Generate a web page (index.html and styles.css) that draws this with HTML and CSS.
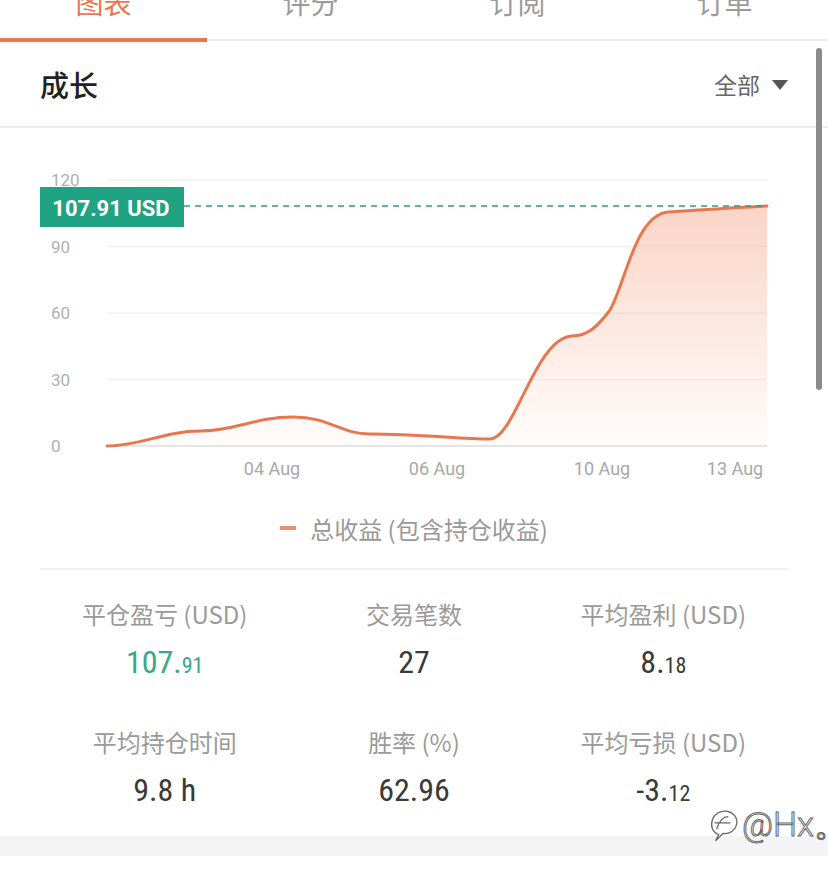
FILE: index.html
```html
<!DOCTYPE html>
<html>
    <head>
        <title>成长</title>
        <meta charset="utf-8">
        <link rel="stylesheet" href="styles.css">
    </head>
    <body>
        <div id="page">
            <div class="tabs">
                <div class="tab active">图表</div>
                <div class="tab">评分</div>
                <div class="tab">订阅</div>
                <div class="tab">订单</div>
            </div>

            <div class="section-head">
                <span class="section-title">成长</span>
                <span class="range-pick">全部<i class="caret"></i></span>
            </div>

            <div class="chart">
                <svg width="748" height="362" viewBox="0 0 748 362">
                    <defs>
                        <linearGradient id="area" x1="0" y1="78" x2="0" y2="318" gradientUnits="userSpaceOnUse">
                            <stop offset="0" stop-color="#f07a4e" stop-opacity="0.32"/>
                            <stop offset="1" stop-color="#f07a4e" stop-opacity="0.02"/>
                        </linearGradient>
                    </defs>
                    <!-- grid -->
                    <g class="grid">
                        <line x1="67" y1="52" x2="727" y2="52"/>
                        <line x1="67" y1="118.5" x2="727" y2="118.5"/>
                        <line x1="67" y1="185" x2="727" y2="185"/>
                        <line x1="67" y1="251.5" x2="727" y2="251.5"/>
                    </g>
                    <line class="base" x1="67" y1="318" x2="727" y2="318"/>
                    <g class="y-labels">
                        <text x="11" y="52">120</text>
                        <text x="11" y="118.5">90</text>
                        <text x="11" y="185">60</text>
                        <text x="11" y="251.5">30</text>
                        <text x="11" y="318">0</text>
                    </g>
                    <g class="x-labels">
                        <text x="232" y="340">04 Aug</text>
                        <text x="397" y="340">06 Aug</text>
                        <text x="562" y="340">10 Aug</text>
                        <text x="695" y="340">13 Aug</text>
                    </g>
                    <path class="area" d="M67,318 C100,318 125,303 160,303 C195,303 215,289 253,289 C290,289 300,306 330,306 C380,306 420,311 450,311 C475,311 495,210 532,208 C548,208 558,198 570,182 C585,157 595,87 628,84 C650,83 680,80 727,78 L727,318 Z"/>
                    <path class="curve" d="M67,318 C100,318 125,303 160,303 C195,303 215,289 253,289 C290,289 300,306 330,306 C380,306 420,311 450,311 C475,311 495,210 532,208 C548,208 558,198 570,182 C585,157 595,87 628,84 C650,83 680,80 727,78"/>
                    <line class="last" x1="144" y1="78" x2="727" y2="78"/>
                    <rect class="tag" x="0" y="59" width="144" height="40"/>
                    <text class="tag-text" x="71" y="80">107.91 USD</text>
                </svg>
                <div class="legend"><i class="legend-mark"></i>总收益 (包含持仓收益)</div>
            </div>

            <div class="stats">
                <div class="stat">
                    <div class="stat-label">平仓盈亏 (USD)</div>
                    <div class="stat-value up">107.<small>91</small></div>
                </div>
                <div class="stat">
                    <div class="stat-label">交易笔数</div>
                    <div class="stat-value">27</div>
                </div>
                <div class="stat">
                    <div class="stat-label">平均盈利 (USD)</div>
                    <div class="stat-value">8.<small>18</small></div>
                </div>
                <div class="stat">
                    <div class="stat-label">平均持仓时间</div>
                    <div class="stat-value">9.8 h</div>
                </div>
                <div class="stat">
                    <div class="stat-label">胜率 (%)</div>
                    <div class="stat-value">62.96</div>
                </div>
                <div class="stat">
                    <div class="stat-label">平均亏损 (USD)</div>
                    <div class="stat-value">-3.<small>12</small></div>
                </div>
            </div>

            <div class="band"></div>

            <div class="scrollbar"></div>
            <div class="watermark">
                <svg width="32" height="38" viewBox="0 0 30 36">
                    <path d="M10,27 C4,25 2,19 4,13 C6,7 12,4 18,5 C24,6 28,11 27,17 C26,23 20,27 14,26 L7,33 L10,27 Z" fill="#fff" stroke="#666" stroke-width="1.2"/>
                    <path d="M8,22 C10,15 13,10 19,10 M6,16 L21,16" fill="none" stroke="#666" stroke-width="1.2"/>
                </svg>
                <span>@Hx。</span>
            </div>
        </div>
    </body>
</html>
```

FILE: styles.css
```css
body {
    margin: 0;
    background-color: #fff;
    font-family: "Noto Sans CJK SC", "Noto Sans", sans-serif;
    overflow: hidden;
}

#page {
    position: relative;
    width: 828px;
    height: 873px;
    overflow: hidden;
}

.tabs {
    display: flex;
    margin-top: -12px;
}

.tab {
    flex: 1;
    text-align: center;
    font-size: 28px;
    line-height: 28px;
    color: #9b9b9b;
    padding-bottom: 23px;
    border-bottom: 2px solid #ebebeb;
    margin-bottom: 1px;
}

.tab.active {
    color: #e8774f;
    padding-bottom: 22px;
    border-bottom: 4px solid #e8774f;
    margin-bottom: 0;
}

.section-head {
    display: flex;
    align-items: center;
    justify-content: space-between;
    height: 84px;
    padding: 0 40px;
    border-bottom: 2px solid #ececec;
}

.section-title {
    font-size: 29px;
    font-weight: 500;
    color: #222;
}

.range-pick {
    display: flex;
    align-items: center;
    font-size: 23px;
    color: #666;
}

.caret {
    display: inline-block;
    margin-left: 12px;
    margin-top: 2px;
    border-left: 8px solid transparent;
    border-right: 8px solid transparent;
    border-top: 10px solid #555;
}

.chart {
    padding: 0 40px;
}

.chart svg {
    display: block;
}

.grid line {
    stroke: #f2f2f2;
    stroke-width: 1.5;
}

.base {
    stroke: #dedede;
    stroke-width: 1.5;
}

.y-labels text {
    font-family: Roboto, "Liberation Sans", sans-serif;
    font-size: 17px;
    fill: #b0b0b0;
    dominant-baseline: central;
}

.x-labels text {
    font-family: Roboto, "Liberation Sans", sans-serif;
    font-size: 18px;
    fill: #a8a8a8;
    text-anchor: middle;
    dominant-baseline: central;
}

.area {
    fill: url(#area);
}

.curve {
    fill: none;
    stroke: #e8774f;
    stroke-width: 3;
    stroke-linecap: round;
}

.last {
    stroke: #27a080;
    stroke-width: 1.5;
    stroke-dasharray: 6 5;
}

.tag {
    fill: #1fa383;
}

.tag-text {
    font-family: Roboto, "Liberation Sans", sans-serif;
    font-size: 22px;
    font-weight: 700;
    fill: #fff;
    text-anchor: middle;
    dominant-baseline: central;
}

.legend {
    display: flex;
    align-items: center;
    justify-content: center;
    margin-top: 22px;
    margin-bottom: 24px;
    height: 32px;
    font-size: 24px;
    color: #999;
}

.legend-mark {
    display: inline-block;
    width: 16px;
    height: 4px;
    background-color: #e8906d;
    margin-right: 14px;
}

.stats {
    display: grid;
    grid-template-columns: repeat(3, 1fr);
    row-gap: 40px;
    margin: 0 40px;
    padding: 28px 0 22px;
    border-top: 2px solid #f1f1f1;
}

.stat {
    display: flex;
    flex-direction: column;
    align-items: center;
    gap: 12px;
}

.stat-label {
    font-size: 24px;
    line-height: 32px;
    color: #9a9a9a;
}

.stat-value {
    font-family: "Liberation Sans Narrow", "Roboto Condensed", Roboto, sans-serif;
    font-size: 32px;
    line-height: 40px;
    color: #3a3a3a;
}

.stat-value small {
    font-size: 22px;
}

.stat-value.up {
    color: #35a98a;
}

.band {
    height: 20px;
    background-color: #f4f4f6;
}

.scrollbar {
    position: absolute;
    left: 816px;
    top: 48px;
    width: 6px;
    height: 342px;
    border-radius: 3px;
    background-color: #8c8c8c;
}

.watermark {
    position: absolute;
    left: 708px;
    top: 802px;
    display: flex;
    align-items: center;
    gap: 2px;
    font-family: Roboto, "Liberation Sans", sans-serif;
    font-weight: 300;
    font-size: 34px;
    color: #fff;
    -webkit-text-stroke: 1px #666;
}
```
